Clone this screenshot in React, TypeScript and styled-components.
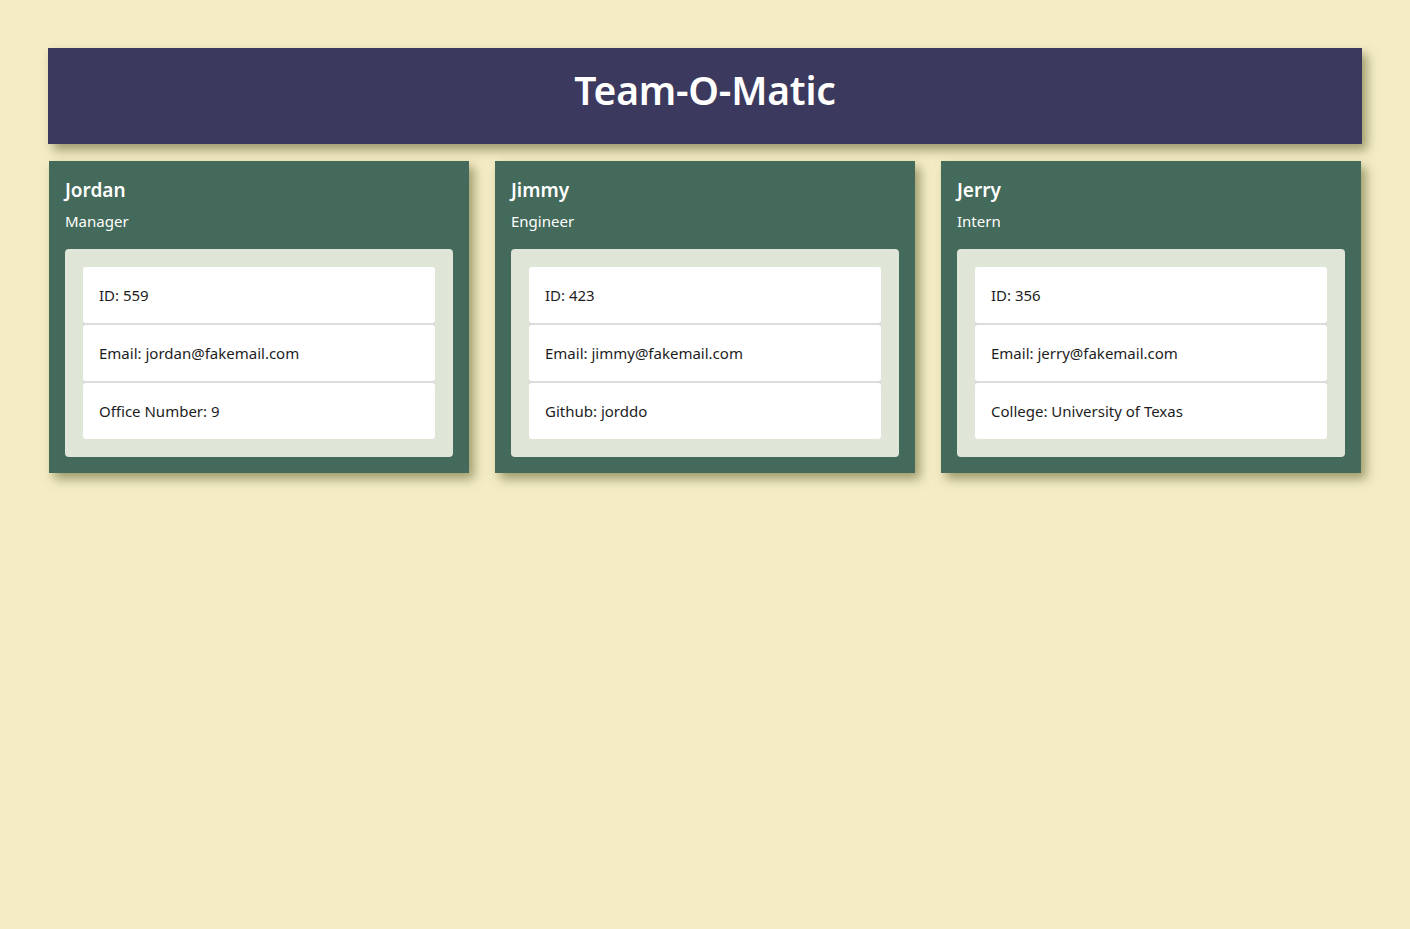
import React from "react";
import styled, { createGlobalStyle } from "styled-components";

const Global = createGlobalStyle`
  html, body { margin: 0; padding: 0; }
  body {
    background: #f4ecc5;
    font-family: "Noto Sans", "Open Sans", sans-serif;
    color: #212529;
    min-height: 929px;
  }
  * { box-sizing: border-box; }
`;

const Page = styled.div`
  padding: 48px 48px 0 48px;
  display: flex;
  flex-direction: column;
  gap: 17px;
`;

const Header = styled.header`
  height: 96px;
  background: #3b395e;
  display: flex;
  align-items: center;
  justify-content: center;
  padding-bottom: 14px;
  box-shadow: 5px 6px 10px rgba(120, 120, 70, 0.7);
`;

const Title = styled.h1`
  margin: 0;
  color: #fff;
  font-size: 39px;
  font-weight: 600;
  letter-spacing: -0.2px;
`;

const Row = styled.div`
  display: flex;
  gap: 26px;
  padding: 0 1px;
`;

const Card = styled.section`
  flex: 1;
  background: #436a5a;
  padding: 16px;
  box-shadow: 5px 6px 10px rgba(120, 120, 70, 0.7);
`;

const Name = styled.h5`
  margin: 0 0 7px;
  color: #fff;
  font-size: 19px;
  font-weight: 600;
  line-height: 26px;
`;

const Role = styled.h6`
  margin: 0 0 17px;
  color: #fff;
  font-size: 15px;
  font-weight: 400;
  line-height: 22px;
`;

const Inner = styled.div`
  background: #dfe6d8;
  border-radius: 4px;
  padding: 18px;
`;

const List = styled.ul`
  list-style: none;
  margin: 0;
  padding: 0;
  display: flex;
  flex-direction: column;
  gap: 2px;
  background: #dcdcdc;
  border-radius: 4px;
`;

const Item = styled.li`
  height: 56px;
  display: flex;
  align-items: center;
  padding: 0 16px;
  background: #fff;
  border-radius: 3px;
  font-size: 15px;
  color: #1d1d1d;
`;

const team = [
  { name: "Jordan", role: "Manager", rows: ["ID: 559", "Email: jordan@fakemail.com", "Office Number: 9"] },
  { name: "Jimmy", role: "Engineer", rows: ["ID: 423", "Email: jimmy@fakemail.com", "Github: jorddo"] },
  { name: "Jerry", role: "Intern", rows: ["ID: 356", "Email: jerry@fakemail.com", "College: University of Texas"] },
];

export default function App() {
  return (
    <>
      <Global />
      <Page>
        <Header>
          <Title>Team-O-Matic</Title>
        </Header>
        <Row>
          {team.map((m) => (
            <Card key={m.name}>
              <Name>{m.name}</Name>
              <Role>{m.role}</Role>
              <Inner>
                <List>
                  {m.rows.map((r) => (
                    <Item key={r}>{r}</Item>
                  ))}
                </List>
              </Inner>
            </Card>
          ))}
        </Row>
      </Page>
    </>
  );
}
